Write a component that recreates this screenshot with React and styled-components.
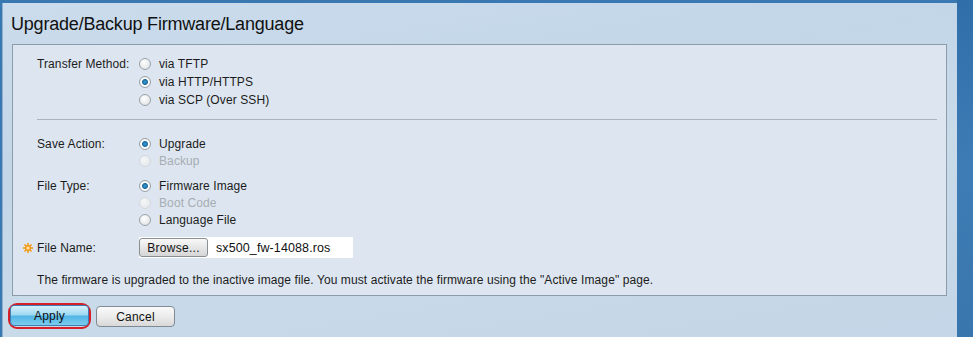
import React from "react";
import styled, { createGlobalStyle } from "styled-components";

const GlobalStyle = createGlobalStyle`
  html, body {
    margin: 0;
    padding: 0;
    background: #c6d8e9;
  }
  body {
    font-family: "Liberation Sans", Arial, sans-serif;
    font-size: 12px;
    letter-spacing: 0.1px;
    color: #1c1c1c;
  }
`;

const Frame = styled.div`
  display: flex;
  width: 973px;
  height: 337px;
  overflow: hidden;
  background: #3a78b1;
`;

const Main = styled.div`
  flex: 1;
  margin-top: 3px;
  margin-left: 2px;
  border-left: 1px solid #8fb0cf;
  background: linear-gradient(170deg, #cbdcec 0%, #c2d6e8 35%, #c9dae9 60%, #c4d6e7 100%);
  padding: 0 10px 0 8px;
`;

const RightBar = styled.div`
  width: 16px;
  background: linear-gradient(180deg, #2f6ea8 0%, #3d7cb5 50%, #3a76ae 100%);
`;

const Title = styled.h1`
  margin: 0;
  padding: 11px 0 0 0;
  height: 30px;
  font-size: 18px;
  font-weight: normal;
  letter-spacing: -0.2px;
  color: #111;
`;

const Panel = styled.div`
  border: 1px solid #8d9caa;
  background: #dde6f0;
  padding: 10px 9px 9px 24px;
  margin-left: 1px;
  height: 231px;
  box-sizing: content-box;
  width: 900px;
`;

const Group = styled.div`
  display: grid;
  grid-template-columns: 102px 1fr;
  margin-bottom: ${(p) => p.$gap || 0}px;
`;

const Label = styled.div`
  display: flex;
  align-items: center;
  height: ${(p) => p.$h || 17}px;
  position: relative;
`;

const Options = styled.div`
  display: flex;
  flex-direction: column;
`;

const Option = styled.label`
  display: flex;
  align-items: center;
  gap: 8px;
  height: ${(p) => p.$h || 17}px;
  color: ${(p) => (p.$disabled ? "#a7adb3" : "#1c1c1c")};
`;

const Radio = styled.span`
  width: 12px;
  height: 12px;
  border-radius: 50%;
  box-sizing: border-box;
  border: 1px solid ${(p) => (p.$disabled ? "#d3d8dc" : "#9aa2a8")};
  background: ${(p) =>
    p.$checked
      ? "radial-gradient(circle at 50% 50%, #3aa0d6 0, #1e6aa0 2.5px, #ffffff 3.5px, #dfe3e6 100%)"
      : p.$disabled
      ? "radial-gradient(circle at 40% 35%, #f4f6f7 0, #e2e6e9 100%)"
      : "radial-gradient(circle at 40% 35%, #ffffff 0, #d9dde0 100%)"};
`;

const Separator = styled.div`
  height: 1px;
  background: #a9b4be;
  margin: 10px 0 15px 0;
`;

const Star = styled.svg`
  position: absolute;
  left: -14px;
  top: 4px;
`;

const FileRow = styled.div`
  display: grid;
  grid-template-columns: 102px 1fr;
  margin-top: 9px;
  align-items: center;
`;

const FileBox = styled.div`
  display: flex;
  align-items: center;
  width: 214px;
  height: 21px;
  background: #fff;
`;

const BrowseButton = styled.button`
  width: 69px;
  height: 19px;
  margin: 0;
  padding: 0;
  border: 1px solid #8a8f94;
  border-radius: 3px;
  background: linear-gradient(180deg, #f9f9f9 0%, #e6e6e6 50%, #d6d6d6 100%);
  font-family: "Liberation Sans", Arial, sans-serif;
  font-size: 12px;
  letter-spacing: 0.3px;
  color: #111;
`;

const FileText = styled.span`
  font-size: 12.5px;
  margin-left: 8px;
  color: #111;
`;

const Note = styled.p`
  margin: 14px 0 0 0;
  line-height: 17px;
`;

const Buttons = styled.div`
  display: flex;
  align-items: flex-start;
  gap: 5px;
  margin-top: 7px;
  margin-left: -3px;
`;

const Highlight = styled.div`
  border: 2px solid #d5202a;
  border-radius: 9px;
  padding: 0 0 1px 0;
`;

const Button = styled.button`
  width: ${(p) => p.$w}px;
  height: 21px;
  margin: ${(p) => (p.$primary ? "0" : "3px 0 0 0")};
  padding: 0;
  border-radius: 4px;
  font-family: "Liberation Sans", Arial, sans-serif;
  font-size: 12px;
  letter-spacing: 0.2px;
  color: #111;
  border: 1px solid ${(p) => (p.$primary ? "#3c7fb0" : "#7f8a94")};
  background: ${(p) =>
    p.$primary
      ? "linear-gradient(180deg, #d8f1fc 0%, #9fd9f2 45%, #53b6e6 55%, #7ccbee 100%)"
      : "linear-gradient(180deg, #fafafa 0%, #ececec 50%, #d8d8d8 100%)"};
`;

function RadioGroup({ label, items, gap, rowH }) {
  return (
    <Group $gap={gap}>
      <Label $h={rowH}>{label}</Label>
      <Options>
        {items.map((it) => (
          <Option key={it.text} $disabled={it.disabled} $h={rowH}>
            <Radio $checked={it.checked} $disabled={it.disabled} />
            {it.text}
          </Option>
        ))}
      </Options>
    </Group>
  );
}

export default function App() {
  return (
    <>
      <GlobalStyle />
      <Frame>
        <Main>
          <Title>Upgrade/Backup Firmware/Language</Title>
          <Panel>
            <RadioGroup
              label="Transfer Method:"
              rowH={18}
              items={[
                { text: "via TFTP" },
                { text: "via HTTP/HTTPS", checked: true },
                { text: "via SCP (Over SSH)" },
              ]}
            />
            <Separator />
            <RadioGroup
              label="Save Action:"
              gap={8}
              items={[
                { text: "Upgrade", checked: true },
                { text: "Backup", disabled: true },
              ]}
            />
            <RadioGroup
              label="File Type:"
              items={[
                { text: "Firmware Image", checked: true },
                { text: "Boot Code", disabled: true },
                { text: "Language File" },
              ]}
            />
            <FileRow>
              <Label>
                <Star width="10" height="10" viewBox="0 0 10 10">
                  <g fill="#f29a1a">
                    <circle cx="5" cy="5" r="3" />
                    <rect x="4.2" y="0" width="1.6" height="10" />
                    <rect x="0" y="4.2" width="10" height="1.6" />
                    <rect x="4.2" y="0" width="1.6" height="10" transform="rotate(45 5 5)" />
                    <rect x="4.2" y="0" width="1.6" height="10" transform="rotate(-45 5 5)" />
                  </g>
                  <circle cx="5" cy="5" r="1.6" fill="#fde3a8" />
                </Star>
                File Name:
              </Label>
              <FileBox>
                <BrowseButton>Browse...</BrowseButton>
                <FileText>sx500_fw-14088.ros</FileText>
              </FileBox>
            </FileRow>
            <Note>
              The firmware is upgraded to the inactive image file. You must activate the firmware using the "Active Image" page.
            </Note>
          </Panel>
          <Buttons>
            <Highlight>
              <Button $primary $w={79}>Apply</Button>
            </Highlight>
            <Button $w={79}>Cancel</Button>
          </Buttons>
        </Main>
        <RightBar />
      </Frame>
    </>
  );
}
